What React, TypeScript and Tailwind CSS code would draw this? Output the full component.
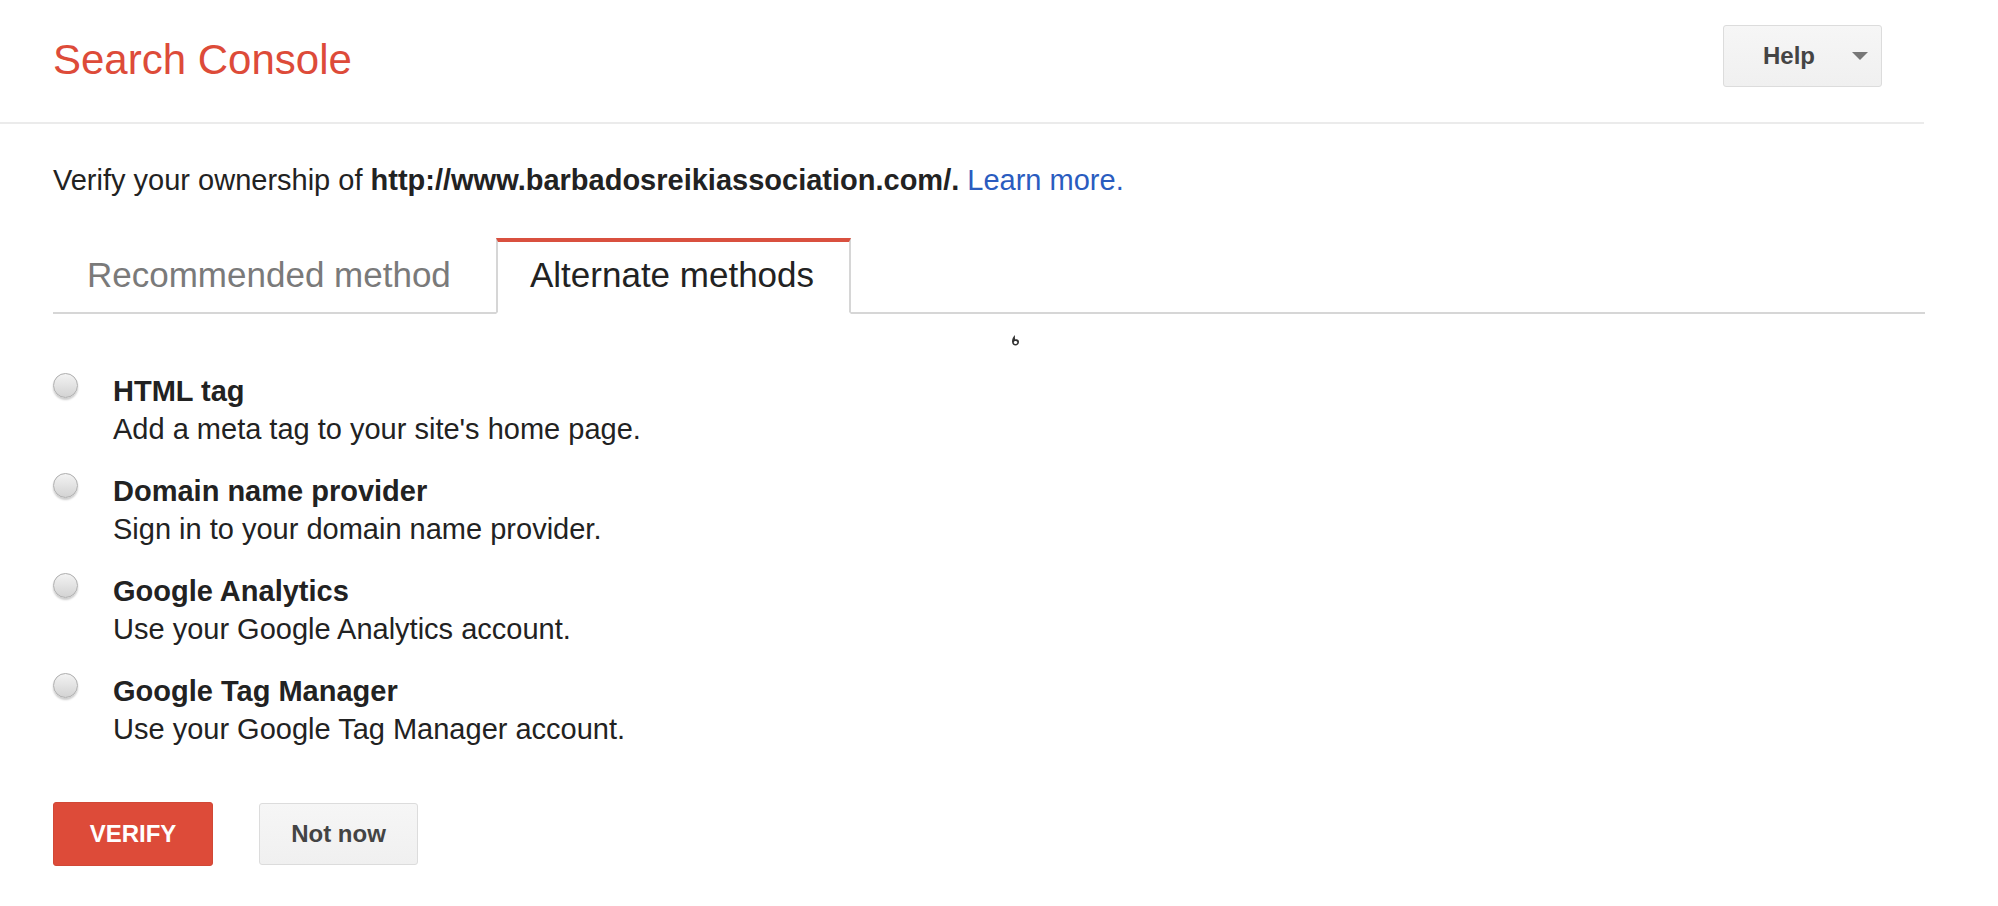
import React from 'react';

const methods = [
  { id: 'html', title: 'HTML tag', desc: "Add a meta tag to your site's home page." },
  { id: 'dns', title: 'Domain name provider', desc: 'Sign in to your domain name provider.' },
  { id: 'ga', title: 'Google Analytics', desc: 'Use your Google Analytics account.' },
  { id: 'gtm', title: 'Google Tag Manager', desc: 'Use your Google Tag Manager account.' },
];

function Radio() {
  return (
    <span className="mt-[1px] mr-[35px] block h-[25px] w-[25px] shrink-0 rounded-full border border-[#adadad] bg-gradient-to-b from-[#f3f3f3] to-[#d3d3d3] shadow-[0_2px_2px_rgba(0,0,0,0.2)]" />
  );
}

export default function App() {
  return (
    <div className="relative min-h-screen bg-white font-['Liberation_Sans',Arial,sans-serif] text-[#222]">
      {/* Header */}
      <header className="flex h-[124px] w-[1924px] items-start justify-between border-b-2 border-[#ebebeb] pl-[53px]">
        <h1 className="pt-[36px] text-[42px] leading-[48px] text-[#dd4b39]">Search Console</h1>
        <button className="mt-[25px] mr-[42px] flex h-[62px] w-[159px] items-center justify-between rounded-[3px] border border-[#dcdcdc] bg-gradient-to-b from-[#f6f6f6] to-[#f0f0f0] pl-[39px] pr-[13px] text-[24px] font-bold text-[#444]">
          <span>Help</span>
          <svg width="16" height="8" viewBox="0 0 16 8">
            <path d="M0 0 L16 0 L8 8 Z" fill="#777" />
          </svg>
        </button>
      </header>

      <main className="w-[1925px] pl-[53px]">
        <p className="mt-[37px] text-[29px] leading-[38px]">
          Verify your ownership of <b>http://www.barbadosreikiassociation.com/.</b>{' '}
          <a className="text-[#2a5cbf]">Learn more.</a>
        </p>

        {/* Tabs */}
        <div className="mt-[39px] flex border-b-2 border-[#d6d6d6]">
          <div className="h-[74px] w-[443px] pl-[34px] pt-[17px] text-[35px] leading-[40px] text-[#7a7a7a]">
            Recommended method
          </div>
          <div className="-mb-[2px] h-[76px] border-x-2 border-t-4 border-b-2 border-x-[#d6d6d6] border-t-[#d9503f] border-b-white bg-white pl-[32px] pr-[35px] pt-[13px] text-[35px] leading-[40px] text-[#222]">
            Alternate methods
          </div>
        </div>

        {/* Methods */}
        <div className="mt-[58px] flex flex-col gap-[24px]">
          {methods.map((m) => (
            <label key={m.id} className="flex items-start">
              <Radio />
              <div className="text-[29px] leading-[38px]">
                <div className="font-bold">{m.title}</div>
                <div>{m.desc}</div>
              </div>
            </label>
          ))}
        </div>

        {/* Actions */}
        <div className="mt-[54px] flex items-start gap-[46px]">
          <button className="h-[64px] w-[160px] rounded-[3px] border border-[#d14836] bg-[#dd4b39] text-[24px] font-bold text-white">
            VERIFY
          </button>
          <button className="mt-[1px] h-[62px] w-[159px] rounded-[3px] border border-[#dcdcdc] bg-gradient-to-b from-[#f6f6f6] to-[#f0f0f0] text-[24px] font-bold text-[#444]">
            Not now
          </button>
        </div>
      </main>

      {/* stray cursor mark */}
      <svg className="absolute left-[1011px] top-[335px]" width="9" height="11" viewBox="0 0 9 11">
        <path d="M4 0 C2 2 1 4 1 6.5 C1 9 2.5 10.5 4.5 10.5 C6.5 10.5 8 9 8 7 C8 5 6.5 4 4.5 4.5 C3.5 3 4 1.5 4 0 Z M4.5 6 C5.5 6 6.3 6.6 6.3 7.5 C6.3 8.4 5.5 9 4.5 9 C3.5 9 2.8 8.4 2.8 7.5 C2.8 6.6 3.5 6 4.5 6 Z" fill="#333" fillRule="evenodd" />
      </svg>
    </div>
  );
}
